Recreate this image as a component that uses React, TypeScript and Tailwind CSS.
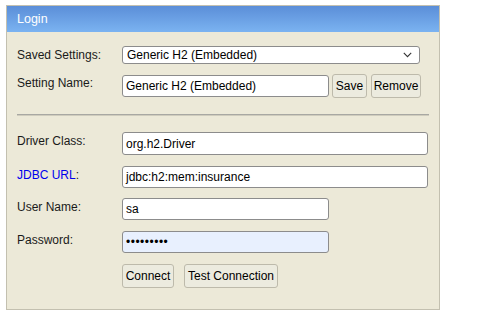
import React from "react";

const font = { fontFamily: '"Liberation Sans", Arial, Helvetica, sans-serif' };

function Label({ children }: { children: React.ReactNode }) {
  return <div className="w-[105px] shrink-0 pt-[2px] leading-[14px] text-[12px] text-[#1a1a1a]">{children}</div>;
}

function TextInput({ value, w, h = "h-[22px]", bg = "bg-white", extra = "" }: { value: string; w: string; h?: string; bg?: string; extra?: string }) {
  return (
    <div className={`${w} ${h} ${bg} flex items-center border border-[#8c8c8c] rounded-[3px] pl-[3px] text-[12px] text-black ${extra}`}>
      {value}
    </div>
  );
}

function Btn({ children, w }: { children: React.ReactNode; w: string }) {
  return (
    <div className={`${w} h-[24px] flex items-center justify-center border border-[#bdbaab] rounded-[3px] bg-[#ecebdf] text-[12px] text-black`}>
      {children}
    </div>
  );
}

export default function App() {
  return (
    <div className="w-[502px] h-[335px] bg-white" style={font}>
      <div className="ml-[6px] mt-[5px] w-[434px] border border-[#c3c0b0] bg-[#ece9d8]">
        <div className="h-[26px] flex items-center pl-[10px] text-white text-[12.5px] bg-gradient-to-b from-[#5b8ed8] to-[#7bb3f1]">
          Login
        </div>
        <div className="pl-[10px] pb-[21px]">
          <div className="mt-[14px] flex items-center">
            <div className="w-[105px] shrink-0 leading-[14px] text-[12px] text-[#1a1a1a]">Saved Settings:</div>
            <div className="w-[298px] h-[18px] flex items-center justify-between bg-white border border-[#8c8c8c] rounded-[3px] pl-[4px] pr-[7px] text-[12px] text-black">
              <span>Generic H2 (Embedded)</span>
              <svg width="9" height="6" viewBox="0 0 9 6" fill="none">
                <path d="M0.8 0.8 L4.5 4.6 L8.2 0.8" stroke="#333" strokeWidth="1.1" />
              </svg>
            </div>
          </div>
          <div className="mt-[10px] flex">
            <Label>Setting Name:</Label>
            <div className="flex">
              <div className="py-[1px]">
                <TextInput value="Generic H2 (Embedded)" w="w-[207px]" />
              </div>
              <div className="ml-[3px]">
                <Btn w="w-[35px]">Save</Btn>
              </div>
              <div className="ml-[4px]">
                <Btn w="w-[50px]">Remove</Btn>
              </div>
            </div>
          </div>
          <div className="mt-[16px] mr-[10px] h-[2px] bg-[#a8a8a3] border-b border-[#cfccbd]" />
          <div className="mt-[16px] flex">
            <Label>Driver Class:</Label>
            <TextInput value="org.h2.Driver" w="w-[306px]" h="h-[23px]" />
          </div>
          <div className="mt-[11px] flex">
            <Label>
              <span className="text-[#0000ee]">JDBC URL</span>:
            </Label>
            <TextInput value="jdbc:h2:mem:insurance" w="w-[306px]" />
          </div>
          <div className="mt-[10px] flex">
            <Label>User Name:</Label>
            <TextInput value="sa" w="w-[207px]" />
          </div>
          <div className="mt-[11px] flex">
            <Label>Password:</Label>
            <TextInput value="•••••••••" w="w-[207px]" bg="bg-[#e8f0fe]" extra="text-[10px] tracking-[0.5px]" />
          </div>
          <div className="mt-[11px] flex">
            <div className="w-[105px] shrink-0" />
            <Btn w="w-[52px]">Connect</Btn>
            <div className="ml-[10px]">
              <Btn w="w-[94px]">Test Connection</Btn>
            </div>
          </div>
        </div>
      </div>
    </div>
  );
}
